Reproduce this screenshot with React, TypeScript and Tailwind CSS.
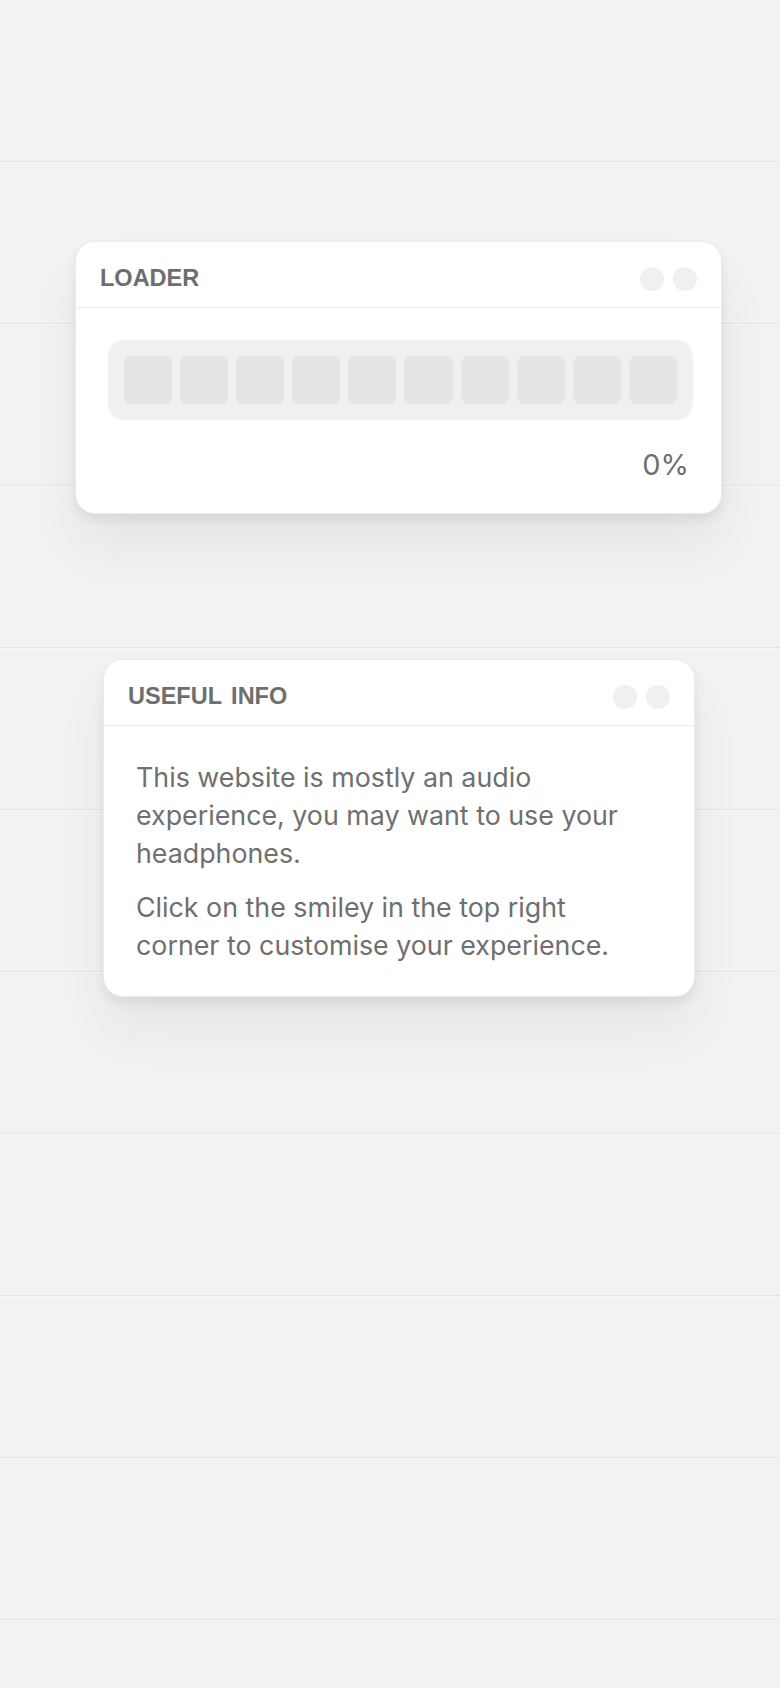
import React from 'react';

const titleFont = { fontFamily: '"Liberation Sans", Arial, sans-serif' };
const bodyFont = { fontFamily: 'Inter, "Noto Sans", sans-serif' };

const WindowDots: React.FC = () => (
    <div className="flex items-center gap-[9px]">
        <span className="block w-6 h-6 rounded-full bg-[#f0f0f0]" />
        <span className="block w-6 h-6 rounded-full bg-[#f0f0f0]" />
    </div>
);

interface WindowProps {
    title: string;
    className?: string;
    children: React.ReactNode;
}

const Window: React.FC<WindowProps> = ({ title, className = '', children }) => (
    <div className={`bg-white rounded-[20px] border border-[#ebebeb] shadow-[0_6px_12px_rgba(0,0,0,0.07),0_34px_56px_rgba(0,0,0,0.05)] overflow-hidden ${className}`}>
        <div className="h-[66px] pt-[9px] flex items-center justify-between px-6 border-b border-[#ededed]">
            <h4 style={titleFont} className="text-[23.5px] font-bold text-[#6e6e6e] [word-spacing:3px]">{title}</h4>
            <WindowDots />
        </div>
        {children}
    </div>
);

export default function App() {
    const cells = Array.from({ length: 10 });
    const progress = 0;

    return (
        <div className="relative min-h-[1688px] w-full bg-[#f2f2f2] overflow-hidden">
            {/* background rows */}
            <div className="absolute inset-x-0 top-0 flex flex-col pointer-events-none">
                {Array.from({ length: 10 }).map((_, i) => (
                    <div key={i} className="h-[162px] border-b border-[#e5e5e5] shadow-[0_1px_0_#f8f8f8]" />
                ))}
            </div>

            <div className="relative flex flex-col pt-[241px]">
                <Window title="LOADER" className="ml-[75px] w-[647px]">
                    <div className="pl-8 pr-7 pt-8 pb-[28px]">
                        <div className="flex gap-2 p-4 rounded-2xl bg-[#f0f0f0]">
                            {cells.map((_, i) => (
                                <div key={i} className="flex-1 h-12 rounded-lg bg-[#e4e4e4]" />
                            ))}
                        </div>
                        <div style={bodyFont} className="mt-[25px] text-right text-[29px] leading-[40px] text-[#6f6f6f] pr-1">
                            {progress}%
                        </div>
                    </div>
                </Window>

                <Window title="USEFUL INFO" className="ml-[103px] w-[592px] mt-[145px]">
                    <div style={bodyFont} className="pl-8 pr-[56px] pt-8 pb-[32px] text-[26.8px] leading-[38px] text-[#6f6f6f] space-y-4">
                        <p>This website is mostly an audio experience, you may want to use your headphones.</p>
                        <p>Click on the smiley in the top right corner to customise your experience.</p>
                    </div>
                </Window>
            </div>
        </div>
    );
}
